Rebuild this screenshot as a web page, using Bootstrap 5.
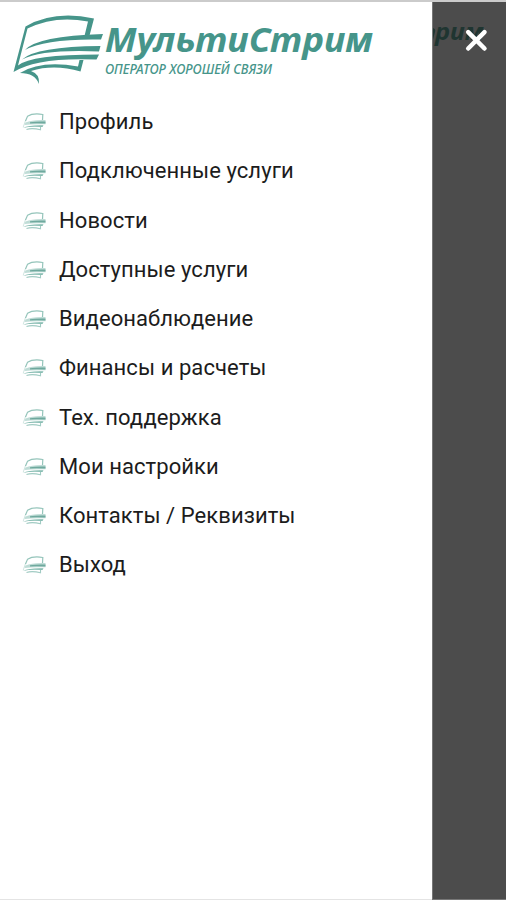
<!DOCTYPE html>
<html lang="ru">
<head>
<meta charset="utf-8">
<meta name="viewport" content="width=device-width, initial-scale=1">
<title>МультиСтрим</title>
<link rel="stylesheet" href="https://cdn.jsdelivr.net/npm/bootstrap@5.3.0/dist/css/bootstrap.min.css">
<style>
body{height:900px;background:#fff;font-family:Roboto,"Noto Sans",sans-serif}
.app{height:900px;border-top:2px solid #cbcbcb}
.drawer{width:432px;border-bottom:1px solid #e4e4e4}
.shade{background:#4c4c4c;border-left:1px solid #777;border-bottom:1px solid #777}
.brand{height:95.6px}
.brand svg{display:block}
.menu-row{height:49.25px;padding-left:22px;color:#1c1c1c;font-size:22px;line-height:1;letter-spacing:.07px}
.menu-row svg{width:25px;height:20px;margin-right:12px;flex:none}
.logo-name{font:italic 700 34px "Noto Sans","Open Sans",sans-serif}
.logo-sub{font:italic 500 13.5px "Noto Sans","Open Sans",sans-serif}
.logo-back{font:italic 700 24px "Noto Sans","Open Sans",sans-serif}
.close-btn{left:31px;top:26px;width:25px;height:25px;line-height:0}
</style>
<script src="https://cdn.jsdelivr.net/npm/bootstrap@5.3.0/dist/js/bootstrap.bundle.min.js"></script>
</head>
<body class="m-0 overflow-hidden">
<svg width="0" height="0" class="position-absolute" aria-hidden="true">
  <defs>
    <symbol id="leaf" viewBox="0 0 25 20">
      <g fill="none" stroke="#79b5a9">
        <path d="M3.500 9L5.500 4.300Q11 .8 20.800 2.500L20.500 8" stroke-width="1.200" opacity=".8"/>
        <path d="M1.200 15.200L3.500 8.500" stroke-width="1" opacity=".35"/>
        <path d="M18.500 15V17.800Q10 15.600 4.500 17.500" stroke-width="1.100" opacity=".7"/>
      </g>
      <path d="M3.500 10.500Q10 7.500 23.500 8V12.300Q10 11.800 2.500 13Z" fill="#a9d0c8" opacity=".75"/>
      <path d="M8 10.200Q14 9.200 23.500 9.500V11.500Q14 10.800 8 11.500Z" fill="#6fa99e"/>
      <path d="M1 16Q7 12.800 21.500 13.300L20.500 15Q8 14 1 16Z" fill="#84bbb0"/>
    </symbol>
  </defs>
</svg>
<div class="app d-flex">
  <aside class="drawer bg-white flex-shrink-0">
    <div class="brand">
      <svg width="432" height="95" viewBox="0 2 432 95" fill="#46958a" role="img" aria-label="МультиСтрим">
        <path d="M13.500 72L25.500 26.500Q54 10 94 18.500L89 37.500L84 38L88 21.500Q55 15 27.500 28.500L18 65.500Q31 54.500 99 54.500L96.500 59.500Q37 57 13.500 72Z"/>
        <path d="M25 50Q37 36 103 34L101 39.500Q45 38.500 25 50Z"/>
        <path d="M22 59.500Q36 46.500 100.500 46L99 51.500Q43 49 22 59.500Z"/>
        <path d="M20 73Q41 60 78 66.500L79.500 60H83.500L80.500 71.500Q54 64 31 71Q40 74 39 84Q35 73 20 73Z"/>
        <text class="logo-name" x="105" y="52" textLength="268" lengthAdjust="spacingAndGlyphs">МультиСтрим</text>
        <text class="logo-sub" x="105" y="74" textLength="167" lengthAdjust="spacingAndGlyphs">ОПЕРАТОР ХОРОШЕЙ СВЯЗИ</text>
      </svg>
    </div>
    <nav>
    </nav>
  </aside>
  <div class="shade flex-grow-1 position-relative overflow-hidden">
    <svg width="73" height="60" viewBox="433 2 73 60" fill="#1f3531" class="d-block" aria-hidden="true">
      <text class="logo-back" x="435" y="39.500" textLength="49" lengthAdjust="spacingAndGlyphs">рим</text>
      <path d="M433 28Q436 29 435 32L433 39.500Z"/>
    </svg>
    <button type="button" class="close-btn btn p-0 border-0 position-absolute" aria-label="Закрыть">
      <svg width="25" height="25" viewBox="0 0 25 25"><path d="M4.200 4.200L20.500 20.500M20.500 4.200L4.200 20.500" stroke="#fff" stroke-width="4.500" stroke-linecap="round" fill="none"/></svg>
    </button>
  </div>
</div>
<script>
const nav = document.querySelector('nav');
const items = ['Профиль','Подключенные услуги','Новости','Доступные услуги','Видеонаблюдение','Финансы и расчеты','Тех. поддержка','Мои настройки','Контакты / Реквизиты','Выход'];
nav.innerHTML = items.map(t => `<a class="menu-row d-flex align-items-center text-decoration-none"><svg><use href="#leaf"/></svg><span>${t}</span></a>`).join('');
</script>
</body>
</html>
